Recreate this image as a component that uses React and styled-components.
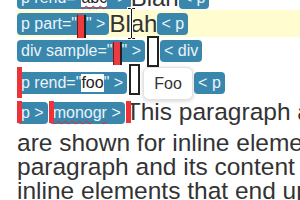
import React from "react";
import styled, { createGlobalStyle } from "styled-components";

const GlobalStyle = createGlobalStyle`
  html, body {
    margin: 0;
    padding: 0;
    background: #fff;
    overflow: hidden;
  }
  body {
    font-family: "Liberation Sans", Arial, sans-serif;
    color: #333;
  }
`;

const Page = styled.div`
  width: 300px;
  height: 200px;
  overflow: hidden;
  position: relative;
`;

const Doc = styled.div`
  margin-top: -14px;
  padding-left: 17px;
`;

const Row = styled.div`
  display: flex;
  align-items: ${(p) => p.$align || "center"};
  height: ${(p) => p.$h}px;
  background: ${(p) => (p.$hl ? "#fffcd0" : "transparent")};
  white-space: nowrap;
`;

const Tag = styled.span`
  display: inline-flex;
  align-items: center;
  flex-shrink: 0;
  height: 22px;
  margin-top: ${(p) => p.$top || 0}px;
  padding: 0 4px;
  box-sizing: border-box;
  background: #3a87ad;
  color: #eaf4f9;
  border-radius: 4px;
  font-size: 16px;
  white-space: pre;
`;

const Value = styled.span`
  background: ${(p) => (p.$plain ? "transparent" : "#fff")};
  color: ${(p) => (p.$plain ? "inherit" : "#222")};
  text-decoration: ${(p) => (p.$spell ? "underline wavy #e0242b" : "none")};
  text-decoration-thickness: 1px;
  text-underline-offset: 2px;
`;

const Caret = styled.span`
  display: inline-block;
  flex-shrink: 0;
  width: 6px;
  height: 23px;
  margin-top: 5px;
  background: #ec3a40;
  border-left: 1px solid #7a1515;
  border-right: 2px solid #222;
`;

const Marker = styled.span`
  display: inline-block;
  flex-shrink: 0;
  position: relative;
  z-index: 1;
  width: 5px;
  height: ${(p) => p.$h}px;
  margin-top: ${(p) => p.$top || 0}px;
  margin-left: ${(p) => p.$gap || 0}px;
  margin-right: ${(p) => (p.$over ? -5 : 0)}px;
  background: #ec3339;
`;

const Text = styled.span`
  font-size: ${(p) => p.$size || 24}px;
  line-height: ${(p) => p.$lh || 24}px;
  color: #333;
`;

const EmptyBox = styled.span`
  display: inline-block;
  flex-shrink: 0;
  box-sizing: border-box;
  width: ${(p) => p.$w || 12}px;
  height: 31px;
  margin: ${(p) => p.$top || 0}px 1px 0 2px;
  border: 2px solid #222;
  background: #fff;
  align-self: ${(p) => p.$self || "center"};
`;

const Tooltip = styled.span`
  display: inline-flex;
  align-items: center;
  justify-content: center;
  flex-shrink: 0;
  box-sizing: border-box;
  width: 50px;
  height: 33px;
  margin: 0 1px 0 2px;
  align-self: flex-end;
  background: #fff;
  border: 1px solid #e2e2e2;
  border-radius: 6px;
  box-shadow: 0 1px 4px rgba(0, 0, 0, 0.18);
  font-size: 16px;
  color: #333;
`;

const Para = styled.div`
  font-size: 24.5px;
  line-height: 24px;
  white-space: nowrap;
`;

const Cursor = styled.svg`
  position: absolute;
  left: 127px;
  top: 7px;
`;

const IBeam = () => (
  <Cursor width="9" height="33" viewBox="0 0 9 33">
    <g fill="none" strokeLinecap="square">
      <path
        d="M1.5 1.5h2l1 1 1-1h2M4.5 2.5v28M1.5 31.5h2l1-1 1 1h2"
        stroke="#fff"
        strokeWidth="3"
      />
      <path
        d="M1.5 1.5h2l1 1 1-1h2M4.5 2.5v28M1.5 31.5h2l1-1 1 1h2"
        stroke="#111"
        strokeWidth="1"
      />
    </g>
  </Cursor>
);

export default function App() {
  return (
    <Page>
      <GlobalStyle />
      <Doc>
        <Row $h={24}>
          <Tag>
            {'p rend="'}
            <Value $spell>abc</Value>
            {'" >'}
          </Tag>
          <Text $lh={24}>Blah</Text>
          <Tag>{"< p"}</Tag>
        </Row>

        <Row $h={27} $hl>
          <Tag>
            {'p part="'}
            <Caret />
            {'" >'}
          </Tag>
          <Text $lh={27}>Blah</Text>
          <Tag>{"< p"}</Tag>
        </Row>

        <Row $h={28}>
          <Tag>
            {'div sample="'}
            <Caret />
            {'" >'}
          </Tag>
          <EmptyBox />
          <Tag>{"< div"}</Tag>
        </Row>

        <Row $h={35}>
          <Marker $h={31} $over />
          <Tag>
            {'p rend="'}
            <Value>foo</Value>
            {'" >'}
          </Tag>
          <EmptyBox $w={11} $self="flex-start" $top={-1} />
          <Tooltip>Foo</Tooltip>
          <Tag>{"< p"}</Tag>
        </Row>

        <Row $h={31} $align="flex-start">
          <Marker $h={22} $top={1} $over />
          <Tag $top={2}>{"p >"}</Tag>
          <Marker $h={22} $top={1} $gap={1} $over />
          <Tag $top={2}>
            <Value $plain $spell>
              monogr
            </Value>
            {" >"}
          </Tag>
          <Marker $h={22} $top={1} $gap={1} $over />
          <Text $size={24.5}>This paragraph and the text</Text>
        </Row>

        <Para>
          are shown for inline elements
          <br />
          paragraph and its content
          <br />
          inline elements that end up
        </Para>
      </Doc>
      <IBeam />
    </Page>
  );
}
